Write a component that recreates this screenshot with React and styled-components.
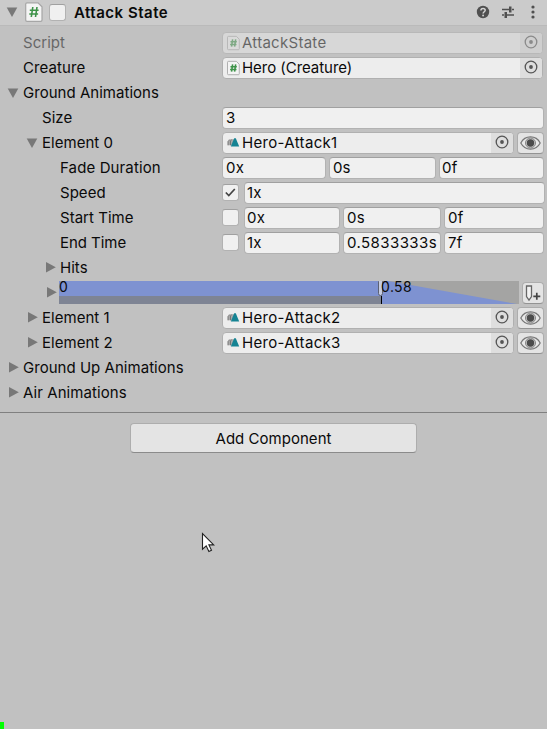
import React from "react";
import styled, { createGlobalStyle } from "styled-components";

const GlobalStyle = createGlobalStyle`
  *, *::before, *::after { box-sizing: border-box; }
  html, body { margin: 0; padding: 0; background: #c1c1c1; overflow: hidden; }
`;

const Panel = styled.main`
  position: relative;
  width: 547px;
  height: 729px;
  overflow: hidden;
  background: #c1c1c1;
  color: #0a0a0a;
  font-family: Inter, "Liberation Sans", sans-serif;
  font-size: 15px;
  line-height: 22px;
  letter-spacing: 0.2px;
  white-space: nowrap;
`;

const Header = styled.header`
  display: flex;
  align-items: center;
  height: 26px;
  padding: 0 7px 1px 6px;
  background: #cbcbcb;
  border-bottom: 1px solid #bababa;
`;

const Title = styled.h1`
  flex: 1;
  margin: 0 0 0 8px;
  padding-top: 1px;
  font-size: 15px;
  font-weight: 600;
  letter-spacing: 0.5px;
`;

const HeaderIcon = styled.svg`
  width: 14px;
  height: 14px;
  margin-left: ${(p) => p.$gap || 0}px;
`;

const Arrow = styled.svg`
  flex: none;
  width: 12px;
  height: 12px;
  fill: #787878;
`;

const Rows = styled.section`
  padding-top: 4px;
  height: 386px;
`;

const Row = styled.div`
  display: grid;
  grid-template-columns: 222px 1fr;
  height: 25px;
  align-items: center;
  opacity: ${(p) => (p.$disabled ? 0.5 : 1)};
`;

const Label = styled.div`
  display: flex;
  align-items: center;
  gap: 4px;
  padding-left: ${(p) => p.$indent}px;
  height: 25px;
  letter-spacing: ${(p) => p.$spacing ?? 0.03}px;
`;

const Fields = styled.div`
  display: flex;
  align-items: center;
  gap: 3px;
  height: 22px;
  margin-top: 1px;
  padding-right: ${(p) => p.$end ?? 3}px;
`;

const Field = styled.div`
  display: flex;
  align-items: center;
  flex: ${(p) => (p.$width ? `0 0 ${p.$width}px` : "1 1 0")};
  min-width: 0;
  height: 22px;
  padding-left: ${(p) => p.$pad ?? 3}px;
  border: 1px solid #b2b2b2;
  border-top-color: #a0a0a0;
  border-radius: 4px;
  background: #f0f0f0;
  letter-spacing: ${(p) => p.$spacing ?? 0.2}px;
`;

const ObjectBox = styled(Field)`
  background: #ededed;
  border-color: #b0b0b0;
  padding-left: 4px;
`;

const ObjectName = styled.span`
  flex: 1;
  margin-left: 2px;
  letter-spacing: ${(p) => p.$spacing ?? 0.33}px;
`;

const Picker = styled.span`
  display: flex;
  align-items: center;
  justify-content: center;
  width: 22px;
  height: 20px;
  padding-bottom: 2px;
  border-radius: 0 3px 3px 0;
  background: #dedede;
`;

const Check = styled.span`
  display: flex;
  align-items: center;
  justify-content: center;
  width: 17px;
  height: 17px;
  flex: none;
  margin: 0 ${(p) => p.$gap ?? 0}px ${(p) => p.$lift ?? 0}px 0;
  border: 1px solid #b2b2b2;
  border-top-color: #a0a0a0;
  border-radius: 3px;
  background: #f0f0f0;
`;

const IconButton = styled.span`
  display: flex;
  align-items: center;
  justify-content: center;
  flex: none;
  width: ${(p) => p.$width || 27}px;
  height: 22px;
  padding-right: 1px;
  border: 1px solid #adadad;
  border-bottom-color: #939393;
  border-radius: 4px;
  background: #e4e4e4;
`;

const TimelineRow = styled.div`
  display: flex;
  align-items: center;
  height: 25px;
  padding: 0 3px 0 45px;
`;

const Timeline = styled.div`
  position: relative;
  width: 460px;
  height: 23px;
  margin: 0 3px 0 2px;
  font-size: 14px;
`;

const TimelineShape = styled.svg`
  display: block;
  width: 460px;
  height: 23px;
`;

const TimeMark = styled.span`
  position: absolute;
  left: ${(p) => p.$at}px;
  top: -4px;
  line-height: 20px;
  letter-spacing: 0.4px;
`;

const Footer = styled.footer`
  display: flex;
  justify-content: center;
  padding-top: 10px;
  border-top: 1px solid #808080;
`;

const AddButton = styled.button`
  width: 287px;
  height: 30px;
  padding: 2px 0 0;
  border: 1px solid #adadad;
  border-bottom-color: #8b8b8b;
  border-radius: 4px;
  background: #e4e4e4;
  color: #0a0a0a;
  font: inherit;
  letter-spacing: 0.03px;
`;

const Cursor = styled.svg`
  position: absolute;
  left: 201px;
  top: 532px;
  width: 15px;
  height: 22px;
`;

const Progress = styled.i`
  position: absolute;
  left: 0;
  bottom: 0;
  width: 4px;
  height: 7px;
  background: #00ff00;
`;

function Foldout({ open }) {
  return (
    <Arrow viewBox="0 0 12 12">
      <path d={open ? "M.7 1.5h10.6L6 11z" : "M2 0v10.5l9.8-5.25z"} />
    </Arrow>
  );
}

function ScriptIcon({ large }) {
  return (
    <svg width={large ? 18 : 13} height={large ? 20 : 16} viewBox="0 0 18 20">
      <path d="M2 .8h11l4 4V18a1.3 1.3 0 0 1-1.3 1.3H2A1.3 1.3 0 0 1 .7 18V2A1.3 1.3 0 0 1 2 .8z" fill="#f4f4f4" stroke="#a6a6a6" strokeWidth="1.2" />
      <path d="M7.8 5 6.3 15M12 5l-1.5 10M4.8 8.2h8.8M4.3 12h8.8" stroke="#3e9349" strokeWidth={large ? 1.6 : 2.2} fill="none" />
    </svg>
  );
}

function ClipIcon() {
  return (
    <svg width="13" height="16" viewBox="0 0 13 16">
      <path d="M2 4.3h5v6H1V6z" fill="#aaa" />
      <path d="M1 10.3V6.5l1.2-1.2M3.5 10.3V6l1.2-1.5" stroke="#777" fill="none" />
      <path d="M7.2 3.2h1.6l3.4 8.2H3.8z" fill="#158393" />
    </svg>
  );
}

function Target() {
  return (
    <svg width="14" height="14" viewBox="0 0 14 14">
      <circle cx="7" cy="7" r="5.8" fill="none" stroke="#555" strokeWidth="1.3" />
      <circle cx="7" cy="7" r="1.9" fill="#555" />
    </svg>
  );
}

function Eye() {
  return (
    <svg width="21" height="16" viewBox="0 0 21 16">
      <path d="M.8 8C5-.1 16-.1 20.2 8 16 16.1 5 16.1.8 8z" fill="#e8e8e8" stroke="#777" strokeWidth="1.2" />
      <circle cx="10.5" cy="8" r="5" fill="#c9c9c9" stroke="#858585" />
      <circle cx="10.5" cy="8" r="3.7" fill="#4c4c4c" />
    </svg>
  );
}

function ObjectField({ name, script, preview, spacing }) {
  return (
    <Fields $end={preview ? 3 : 4}>
      <ObjectBox>
        {script ? <ScriptIcon /> : <ClipIcon />}
        <ObjectName $spacing={spacing}>{name}</ObjectName>
        <Picker><Target /></Picker>
      </ObjectBox>
      {preview && <IconButton><Eye /></IconButton>}
    </Fields>
  );
}

function Toggle({ on, gap, lift }) {
  return (
    <Check $gap={gap} $lift={lift}>
      {on && (
        <svg width="13" height="13" viewBox="0 0 13 13">
          <path d="m1.8 6.5 3 3 6-6.5" fill="none" stroke="#444" strokeWidth="1.7" />
        </svg>
      )}
    </Check>
  );
}

export default function App() {
  return (
    <Panel>
      <GlobalStyle />
      <Header>
        <Foldout open />
        <svg width="7" height="1" />
        <ScriptIcon large />
        <svg width="6" height="1" />
        <Toggle />
        <Title>Attack State</Title>
        <HeaderIcon viewBox="0 0 14 14">
          <circle cx="7" cy="7" r="6.2" fill="#505050" />
          <path d="M4.9 5.4c0-2.7 4.3-2.5 4.3-.2 0 1.5-2.1 1.6-2.1 3.3" fill="none" stroke="#d4d4d4" strokeWidth="1.5" />
          <circle cx="7.1" cy="10.5" r=".95" fill="#d4d4d4" />
        </HeaderIcon>
        <HeaderIcon $gap={11} viewBox="0 0 14 14">
          <path d="M1 4.5h7M11 4.5h2M1 10h2M6 10h7" stroke="#505050" strokeWidth="1.5" />
          <path d="M8 1.5h2.5v6H8zM3.5 7H6v6H3.5z" fill="#505050" />
        </HeaderIcon>
        <HeaderIcon $gap={11} viewBox="0 0 14 14">
          <circle cx="7" cy="2" r="1.6" fill="#505050" />
          <circle cx="7" cy="7" r="1.6" fill="#505050" />
          <circle cx="7" cy="12" r="1.6" fill="#505050" />
        </HeaderIcon>
      </Header>

      <Rows>
        <Row $disabled><Label $indent={23}>Script</Label><ObjectField script name="AttackState" spacing={0.28} /></Row>
        <Row><Label $indent={23} $spacing={0.1}>Creature</Label><ObjectField script name="Hero (Creature)" spacing={-0.04} /></Row>
        <Row><Label $indent={7}><Foldout open />Ground Animations</Label></Row>
        <Row><Label $indent={42}>Size</Label><Fields><Field>3</Field></Fields></Row>
        <Row><Label $indent={26}><Foldout open />Element 0</Label><ObjectField preview name="Hero-Attack1" /></Row>
        <Row>
          <Label $indent={60} $spacing={0.12}>Fade Duration</Label>
          <Fields><Field $width={104}>0x</Field><Field $width={107} $spacing={0}>0s</Field><Field $pad={2}>0f</Field></Fields>
        </Row>
        <Row>
          <Label $indent={60}>Speed</Label>
          <Fields $end={2}><Toggle on gap={2} lift={2} /><Field $pad={2}>1x</Field></Fields>
        </Row>
        <Row>
          <Label $indent={60}>Start Time</Label>
          <Fields><Toggle gap={2} lift={2} /><Field $width={96} $pad={2}>0x</Field><Field $width={98}>0s</Field><Field>0f</Field></Fields>
        </Row>
        <Row>
          <Label $indent={60} $spacing={-0.05}>End Time</Label>
          <Fields><Toggle gap={2} lift={2} /><Field $width={96} $pad={2}>1x</Field><Field $width={98} $spacing={0.42}>0.5833333s</Field><Field>7f</Field></Fields>
        </Row>
        <Row><Label $indent={44}><Foldout />Hits</Label></Row>
        <TimelineRow>
          <Foldout />
          <Timeline>
            <TimelineShape viewBox="0 0 460 23">
              <path fill="#a4a4a3" d="M0 0h460v23H0z" />
              <path fill="#7e92d1" d="M0 0h322v15H0zM322 0h7l129 23H322z" />
              <path fill="#7e8494" d="M0 15h322v8H0z" />
              <path fill="#000" d="M322 15h1v8h-1z" />
              <rect x="319.5" y="-1.5" width="4" height="16" rx="2" fill="#c6cce0" stroke="#5c6173" />
            </TimelineShape>
            <TimeMark $at={0}>0</TimeMark>
            <TimeMark $at={322}>0.58</TimeMark>
          </Timeline>
          <IconButton $width={22}>
            <svg width="17" height="18" viewBox="0 0 17 18">
              <path d="M2.5 2h5v10.5L5 16.2 2.5 12.5z" fill="#f2f2f2" stroke="#666" strokeWidth="1.3" />
              <path d="M9.3 12.3h7M12.8 8.8v7" stroke="#444" strokeWidth="1.7" />
            </svg>
          </IconButton>
        </TimelineRow>
        <Row><Label $indent={26}><Foldout />Element 1</Label><ObjectField preview name="Hero-Attack2" /></Row>
        <Row><Label $indent={26}><Foldout />Element 2</Label><ObjectField preview name="Hero-Attack3" /></Row>
        <Row><Label $indent={7}><Foldout />Ground Up Animations</Label></Row>
        <Row><Label $indent={7} $spacing={0.07}><Foldout />Air Animations</Label></Row>
      </Rows>

      <Footer><AddButton>Add Component</AddButton></Footer>

      <Cursor viewBox="0 0 15 22">
        <path d="M1.5 1.5v15.7l3.7-3.4 2.7 5.7 2.6-1.2-2.6-5.4h4.8z" fill="#fff" stroke="#222" strokeWidth="1.1" />
      </Cursor>
      <Progress />
    </Panel>
  );
}
